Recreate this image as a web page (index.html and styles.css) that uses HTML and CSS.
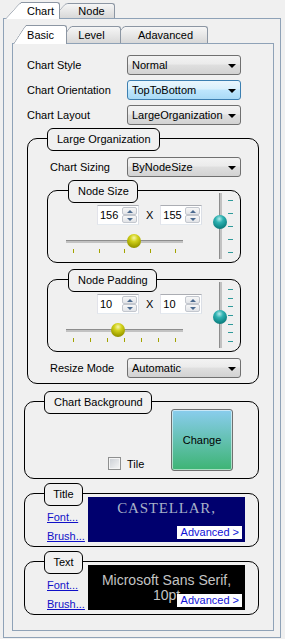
FILE: index.html
```html
<!DOCTYPE html>
<html lang="en">
<head>
    <meta charset="UTF-8">
    <title>Chart Options</title>
    <link rel="stylesheet" href="styles.css">
</head>
<body>
    <div class="outer">
        <div class="tabs">
            <div class="tab sel t-chart">Chart</div>
            <div class="tab t-node">Node</div>
        </div>
        <div class="panel outer-panel">
            <div class="inner">
                <div class="tabs">
                    <div class="tab sel t-basic">Basic</div>
                    <div class="tab t-level">Level</div>
                    <div class="tab t-adv">Adavanced</div>
                </div>
                <div class="panel inner-panel">
                    <div class="field">
                        <span class="label">Chart Style</span>
                        <div class="combo"><span>Normal</span><i class="arrow"></i></div>
                    </div>
                    <div class="field">
                        <span class="label">Chart Orientation</span>
                        <div class="combo hot"><span>TopToBottom</span><i class="arrow"></i></div>
                    </div>
                    <div class="field">
                        <span class="label">Chart Layout</span>
                        <div class="combo"><span>LargeOrganization</span><i class="arrow"></i></div>
                    </div>

                    <div class="group org">
                        <div class="legend">Large Organization</div>
                        <div class="field">
                            <span class="label">Chart Sizing</span>
                            <div class="combo"><span>ByNodeSize</span><i class="arrow"></i></div>
                        </div>

                        <div class="group node-group">
                            <div class="main">
                                <div class="legend">Node Size</div>
                                <div class="spins">
                                    <div class="spin"><span class="spin-val">156</span><div class="spin-btns"><b class="up"></b><b class="down"></b></div></div>
                                    <span class="times">X</span>
                                    <div class="spin"><span class="spin-val">155</span><div class="spin-btns"><b class="up"></b><b class="down"></b></div></div>
                                </div>
                                <div class="hslider">
                                    <div class="hline"></div>
                                    <span class="thumb olive" style="left: 61px"></span>
                                </div>
                                <div class="hticks"><i></i><i></i><i></i><i></i><i></i></div>
                            </div>
                            <div class="vslider">
                                <div class="vline"></div>
                                <span class="thumb teal" style="top: 22px"></span>
                                <div class="vticks"><i></i><i></i><i></i><i></i><i></i></div>
                            </div>
                        </div>

                        <div class="group node-group padding-group">
                            <div class="main">
                                <div class="legend">Node Padding</div>
                                <div class="spins">
                                    <div class="spin"><span class="spin-val">10</span><div class="spin-btns"><b class="up"></b><b class="down"></b></div></div>
                                    <span class="times">X</span>
                                    <div class="spin"><span class="spin-val">10</span><div class="spin-btns"><b class="up"></b><b class="down"></b></div></div>
                                </div>
                                <div class="hslider">
                                    <div class="hline"></div>
                                    <span class="thumb olive" style="left: 45px"></span>
                                </div>
                                <div class="hticks"><i></i><i></i><i></i><i></i><i></i><i></i><i></i></div>
                            </div>
                            <div class="vslider">
                                <div class="vline"></div>
                                <span class="thumb teal" style="top: 28px"></span>
                                <div class="vticks"><i></i><i></i><i></i><i></i><i></i><i></i><i></i></div>
                            </div>
                        </div>

                        <div class="field">
                            <span class="label">Resize Mode</span>
                            <div class="combo"><span>Automatic</span><i class="arrow"></i></div>
                        </div>
                    </div>

                    <div class="group bg-group">
                        <div class="bg-left">
                            <div class="legend">Chart Background</div>
                            <label class="check-row"><span class="check"></span><span class="check-text">Tile</span></label>
                        </div>
                        <div class="change">Change</div>
                    </div>

                    <div class="group font-group">
                        <div class="font-left">
                            <div class="legend small">Title</div>
                            <div class="links">
                                <a class="link">Font...</a>
                                <a class="link">Brush...</a>
                            </div>
                        </div>
                        <div class="preview title-preview">
                            <div class="castellar">CASTELLAR,</div>
                            <a class="adv">Advanced &gt;</a>
                        </div>
                    </div>

                    <div class="group font-group">
                        <div class="font-left">
                            <div class="legend small">Text</div>
                            <div class="links">
                                <a class="link">Font...</a>
                                <a class="link">Brush...</a>
                            </div>
                        </div>
                        <div class="preview text-preview">
                            <div class="mss">Microsoft Sans Serif, 10pt</div>
                            <a class="adv">Advanced &gt;</a>
                        </div>
                    </div>
                </div>
            </div>
        </div>
    </div>
</body>
</html>
```

FILE: styles.css
```css
* {
    box-sizing: border-box;
}

body {
    margin: 0;
    background: #f0f0f0;
    font: 11px "Liberation Sans", Arial, sans-serif;
    color: #000;
}

/* tab controls */

.outer {
    width: 278px;
    margin: 2px 0 0 3px;
}

.tabs {
    display: flex;
    align-items: flex-start;
    margin-bottom: -1px;
}

.outer > .tabs {
    height: 17px;
    padding-left: 2px;
}

.inner > .tabs {
    height: 19px;
    padding-left: 1px;
}

.tab {
    position: relative;
    z-index: 1;
    display: flex;
    align-items: center;
    justify-content: center;
    height: 15px;
    margin-top: 1px;
    padding-left: 16px;
}

.inner .tab {
    height: 17px;
    padding-left: 13px;
}

.tab.sel {
    z-index: 3;
    height: 17px;
    margin-top: 0;
}

.inner .tab.sel {
    height: 19px;
}

.tab::before,
.tab::after {
    content: "";
    position: absolute;
    top: 0;
    bottom: 0;
    z-index: -1;
    background: linear-gradient(#f6f6f6, #d8d8d8);
    border-top: 1px solid #8c96a3;
}

.tab::before {
    left: 0;
    width: 26px;
    border-left: 1px solid #8c96a3;
    border-top-left-radius: 3px;
    transform-origin: 0 100%;
    transform: skewX(-42deg);
}

.tab::after {
    left: 16px;
    right: 0;
    border-right: 1px solid #8c96a3;
    border-top-right-radius: 3px;
}

.inner .tab::before {
    transform: skewX(-33deg);
}

.inner .tab::after {
    left: 13px;
}

.tab.sel::before,
.tab.sel::after {
    background: #fff;
}

.t-chart { width: 55px; }
.t-node { width: 63px; margin-left: -8px; }
.t-basic { width: 54px; padding-right: 12px; }
.t-level { width: 62px; margin-left: -8px; padding-right: 10px; z-index: 2; }
.t-adv { width: 96px; margin-left: -9px; padding-right: 2px; }

.panel {
    border: 1px solid #8fa2b7;
    background: #f0f0f0;
}

.outer-panel {
    height: 620px;
    padding: 6px 6px 0 8px;
}

.inner-panel {
    height: 588px;
    padding: 11px 0 0 14px;
}

/* fields */

.field {
    display: flex;
    align-items: center;
    height: 20px;
    margin-bottom: 5px;
}

.field .label {
    width: 100px;
}

.combo {
    display: flex;
    align-items: center;
    justify-content: space-between;
    width: 114px;
    height: 20px;
    padding: 0 4px 0 4px;
    border: 1px solid #707070;
    border-radius: 3px;
    background: linear-gradient(#f3f3f3 0%, #ebebeb 45%, #dfdfdf 50%, #d2d2d2 100%);
}

.combo.hot {
    border-color: #3c7fb1;
    background: linear-gradient(#eaf6fd 0%, #d9f0fc 45%, #bee6fd 50%, #a9daf6 100%);
}

.arrow {
    width: 0;
    height: 0;
    margin-top: 1px;
    border-left: 4px solid transparent;
    border-right: 4px solid transparent;
    border-top: 4px solid #000;
}

/* group boxes */

.group {
    border: 1px solid #000;
    border-radius: 10px;
}

.legend {
    display: block;
    align-self: flex-start;
    width: fit-content;
    height: 23px;
    margin-top: -11px;
    padding: 0 8px 0 9px;
    border: 1px solid #000;
    border-radius: 6px;
    background: #f0f0f0;
    line-height: 21px;
    white-space: nowrap;
}

.legend.small {
    width: 39px;
    padding: 0;
    text-align: center;
}

.org {
    margin: 13px 14px 0 0;
    padding-bottom: 5px;
}

.org > .legend {
    margin-left: 19px;
}

.org .field {
    margin: 6px 0 0;
    padding-left: 22px;
}

.org .field .label {
    width: 77px;
}

.node-group {
    display: flex;
    height: 73px;
    margin: 13px 17px 0 19px;
}

.padding-group {
    margin-top: 16px;
}

.main {
    flex: 1;
    display: flex;
    flex-direction: column;
    align-items: flex-start;
}

.main .legend {
    margin-left: 20px;
}

.spins {
    display: flex;
    align-items: center;
    margin: 2px 0 0 49px;
}

.times {
    margin: 0 7px;
}

.spin {
    display: flex;
    width: 42px;
    height: 20px;
    padding: 1px;
    border: 1px solid;
    border-color: #abadb3 #dbdfe6 #e3e9ef #e2e3ea;
    background: #fff;
}

.spin-val {
    flex: 1;
    padding-left: 1px;
    line-height: 16px;
}

.spin-btns {
    display: flex;
    flex-direction: column;
    width: 15px;
}

.spin-btns b {
    flex: 1;
    display: flex;
    align-items: center;
    justify-content: center;
    border: 1px solid #c3c7ce;
    border-radius: 2px;
    background: linear-gradient(#f7f7f7, #e2e4e8);
}

.spin-btns b::after {
    content: "";
    border-left: 3px solid transparent;
    border-right: 3px solid transparent;
}

.spin-btns .up::after {
    border-bottom: 3px solid #4b6a8f;
}

.spin-btns .down::after {
    border-top: 3px solid #4b6a8f;
}

/* track bars */

.hslider {
    position: relative;
    display: flex;
    align-items: center;
    width: 117px;
    height: 15px;
    margin: 9px 0 0 18px;
}

.hline {
    flex: 1;
    height: 3px;
    border-top: 1px solid #8d8d8d;
    background: #c2c2c2;
}

.hticks {
    display: flex;
    justify-content: space-between;
    width: 117px;
    height: 4px;
    margin-left: 18px;
    padding: 0 7px;
}

.hticks i {
    width: 1px;
    background: #a3a300;
}

.vslider {
    position: relative;
    display: flex;
    width: 21px;
    height: 66px;
    margin: 2px 7px 0 0;
}

.vline {
    width: 3px;
    margin-left: 7px;
    border-left: 1px solid #8d8d8d;
    background: #c2c2c2;
}

.vticks {
    display: flex;
    flex-direction: column;
    justify-content: space-between;
    margin-left: 6px;
    padding: 7px 0 6px;
}

.vticks i {
    width: 5px;
    height: 1px;
    background: #2f9a9a;
}

.thumb {
    position: absolute;
    width: 14px;
    height: 14px;
    border-radius: 50%;
}

.olive {
    top: 0;
    background: radial-gradient(circle at 50% 28%, #f6f6ae 0, #d2d21c 30%, #a5a500 65%, #787800 100%);
}

.teal {
    left: 1px;
    background: radial-gradient(circle at 45% 28%, #b2eaea 0, #2fb2b2 30%, #128a8a 65%, #0a6262 100%);
}

/* background / font groups */

.bg-group {
    display: flex;
    height: 78px;
    margin: 17px 14px 0 -3px;
}

.bg-left {
    flex: 1;
    display: flex;
    flex-direction: column;
    align-items: flex-start;
    justify-content: space-between;
    padding-bottom: 8px;
}

.bg-left .legend {
    margin-left: 19px;
}

.check-row {
    display: flex;
    align-items: center;
    margin-left: 83px;
}

.check {
    width: 13px;
    height: 13px;
    border: 1px solid #8e8f8f;
    background: linear-gradient(135deg, #c9cdd3, #f7f7f7);
    box-shadow: inset 0 0 0 1px #f4f4f4;
}

.check-text {
    margin-left: 6px;
}

.change {
    display: flex;
    align-items: center;
    justify-content: center;
    width: 62px;
    height: 62px;
    margin: 7px 25px 0 0;
    border: 1px solid #707070;
    border-radius: 3px;
    background: linear-gradient(#8acdee, #3db474);
    box-shadow: inset 0 0 0 1px rgba(255, 255, 255, 0.55);
}

.font-group {
    display: flex;
    height: 54px;
    margin: 14px 14px 0 -3px;
}

.font-left {
    display: flex;
    flex-direction: column;
    align-items: flex-start;
    width: 63px;
}

.font-left .legend {
    margin-left: 19px;
}

.links {
    display: flex;
    flex-direction: column;
    gap: 6px;
    margin: 5px 0 0 22px;
    line-height: 13px;
}

.link {
    color: #1010c8;
    text-decoration: underline;
}

.preview {
    position: relative;
    width: 157px;
    height: 45px;
    margin-top: 3px;
    overflow: hidden;
}

.title-preview {
    background: #00006e;
}

.text-preview {
    background: #000;
}

.castellar {
    padding-top: 3px;
    color: #a7b1c8;
    font: 15px/17px "Liberation Serif", serif;
    letter-spacing: 0.8px;
    text-align: center;
}

.mss {
    padding-top: 8px;
    color: #c4c4c4;
    font-size: 14px;
    line-height: 15px;
    text-align: center;
}

.adv {
    position: absolute;
    right: 3px;
    bottom: 3px;
    padding: 0 3px 0 4px;
    background: #fff;
    color: #1010d8;
    line-height: 13px;
}
```
